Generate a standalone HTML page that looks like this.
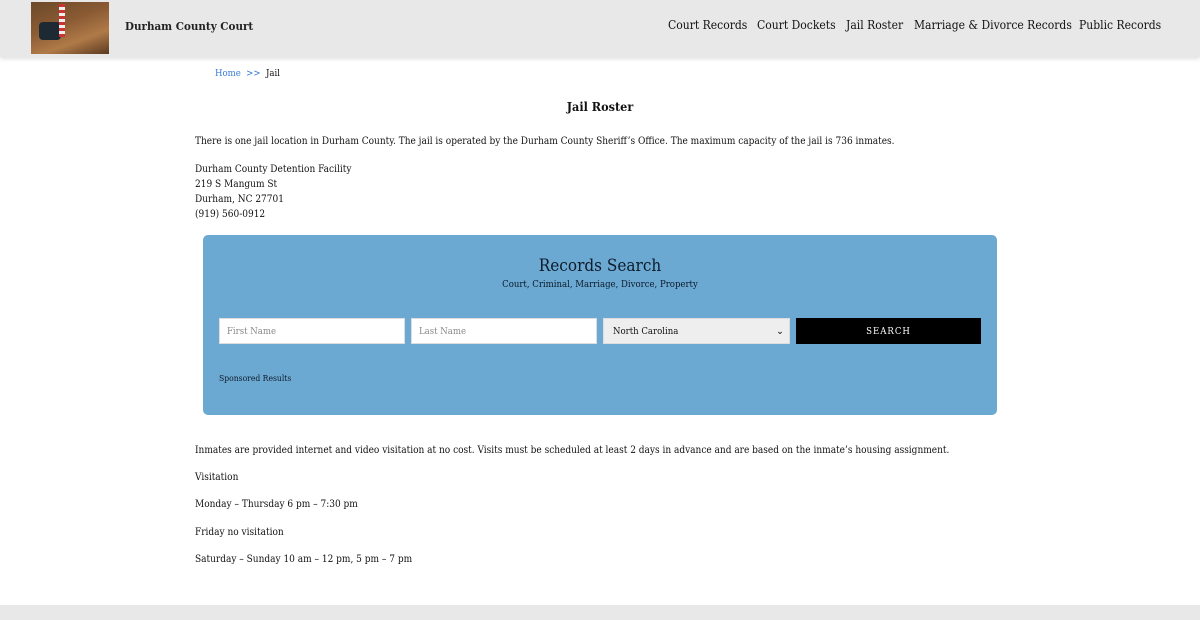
<!DOCTYPE html>
<html><head><style>
body{margin:0;width:1200px;height:620px;overflow:hidden;background:#fff;font-family:"DejaVu Serif Condensed","DejaVu Serif","Liberation Serif",serif;color:#111;position:relative}
.hdr{position:absolute;left:0;top:0;width:1200px;height:57px;background:#e8e8e8;box-shadow:0 2px 4px rgba(0,0,0,.12)}
.logo{position:absolute;left:31px;top:2px;width:78px;height:52px;background:linear-gradient(160deg,#6b4a2a 0%,#8a5a33 40%,#b07a48 70%,#5a3a20 100%)}
.logo:before{content:"";position:absolute;left:8px;top:20px;width:22px;height:18px;background:#1e2a33;border-radius:4px}
.logo:after{content:"";position:absolute;left:28px;top:2px;width:6px;height:33px;background:repeating-linear-gradient(#c33 0 3px,#eee 3px 6px)}
.t{position:absolute;font-size:10px;white-space:nowrap}
.nav{position:absolute;top:18px;font-size:12px;white-space:nowrap}
.box{position:absolute;left:203px;top:235px;width:794px;height:180px;background:#6ca9d2;border-radius:5px}
.in{position:absolute;top:318px;height:26px;background:#fff;border:1px solid #ddd;box-sizing:border-box;font-size:9.5px;color:#888;padding:7px 7px}
</style></head><body>
<div class="hdr"><div class="logo"></div>
<div class="t" style="left:125px;top:19px;font-size:11.5px;font-weight:bold;color:#222">Durham County Court</div>
<div class="nav" style="left:668px">Court Records</div>
<div class="nav" style="left:757px">Court Dockets</div>
<div class="nav" style="left:846px">Jail Roster</div>
<div class="nav" style="left:914px">Marriage &amp; Divorce Records</div>
<div class="nav" style="left:1079px">Public Records</div>
</div>
<div class="t" style="left:215px;top:68px;font-size:9.5px"><span style="color:#3a7bd5">Home &nbsp;&gt;&gt;</span> &nbsp;Jail</div>
<div class="t" style="left:0;width:1200px;text-align:center;top:99px;font-size:12.5px;font-weight:bold">Jail Roster</div>
<div class="t" style="left:195px;top:136px">There is one jail location in Durham County. The jail is operated by the Durham County Sheriff’s Office. The maximum capacity of the jail is 736 inmates.</div>
<div class="t" style="left:195px;top:162px;line-height:15px">Durham County Detention Facility<br>219 S Mangum St<br>Durham, NC 27701<br>(919) 560-0912</div>
<div class="box"></div>
<div class="t" style="left:0;width:1200px;text-align:center;top:256px;font-size:17px;color:#0d1a2a">Records Search</div>
<div class="t" style="left:0;width:1200px;text-align:center;top:279px;font-size:9.5px;color:#0d1a2a">Court, Criminal, Marriage, Divorce, Property</div>
<div class="in" style="left:219px;width:186px">First Name</div>
<div class="in" style="left:411px;width:186px">Last Name</div>
<div class="in" style="left:603px;width:187px;background:#eee;color:#111;padding-left:9px">North Carolina<span style="position:absolute;right:5px">⌄</span></div>
<div class="in" style="left:796px;width:185px;background:#000;border-color:#000;color:#fff;text-align:center;letter-spacing:1px">SEARCH</div>
<div class="t" style="left:219px;top:374px;font-size:8.5px;color:#0d1a2a">Sponsored Results</div>
<div class="t" style="left:195px;top:445px">Inmates are provided internet and video visitation at no cost. Visits must be scheduled at least 2 days in advance and are based on the inmate’s housing assignment.</div>
<div class="t" style="left:195px;top:472px">Visitation</div>
<div class="t" style="left:195px;top:499px">Monday – Thursday 6 pm – 7:30 pm</div>
<div class="t" style="left:195px;top:527px">Friday no visitation</div>
<div class="t" style="left:195px;top:554px">Saturday – Sunday 10 am – 12 pm, 5 pm – 7 pm</div>
<div style="position:absolute;left:0;top:605px;width:1200px;height:15px;background:#e8e8e8"></div>
</body></html>
